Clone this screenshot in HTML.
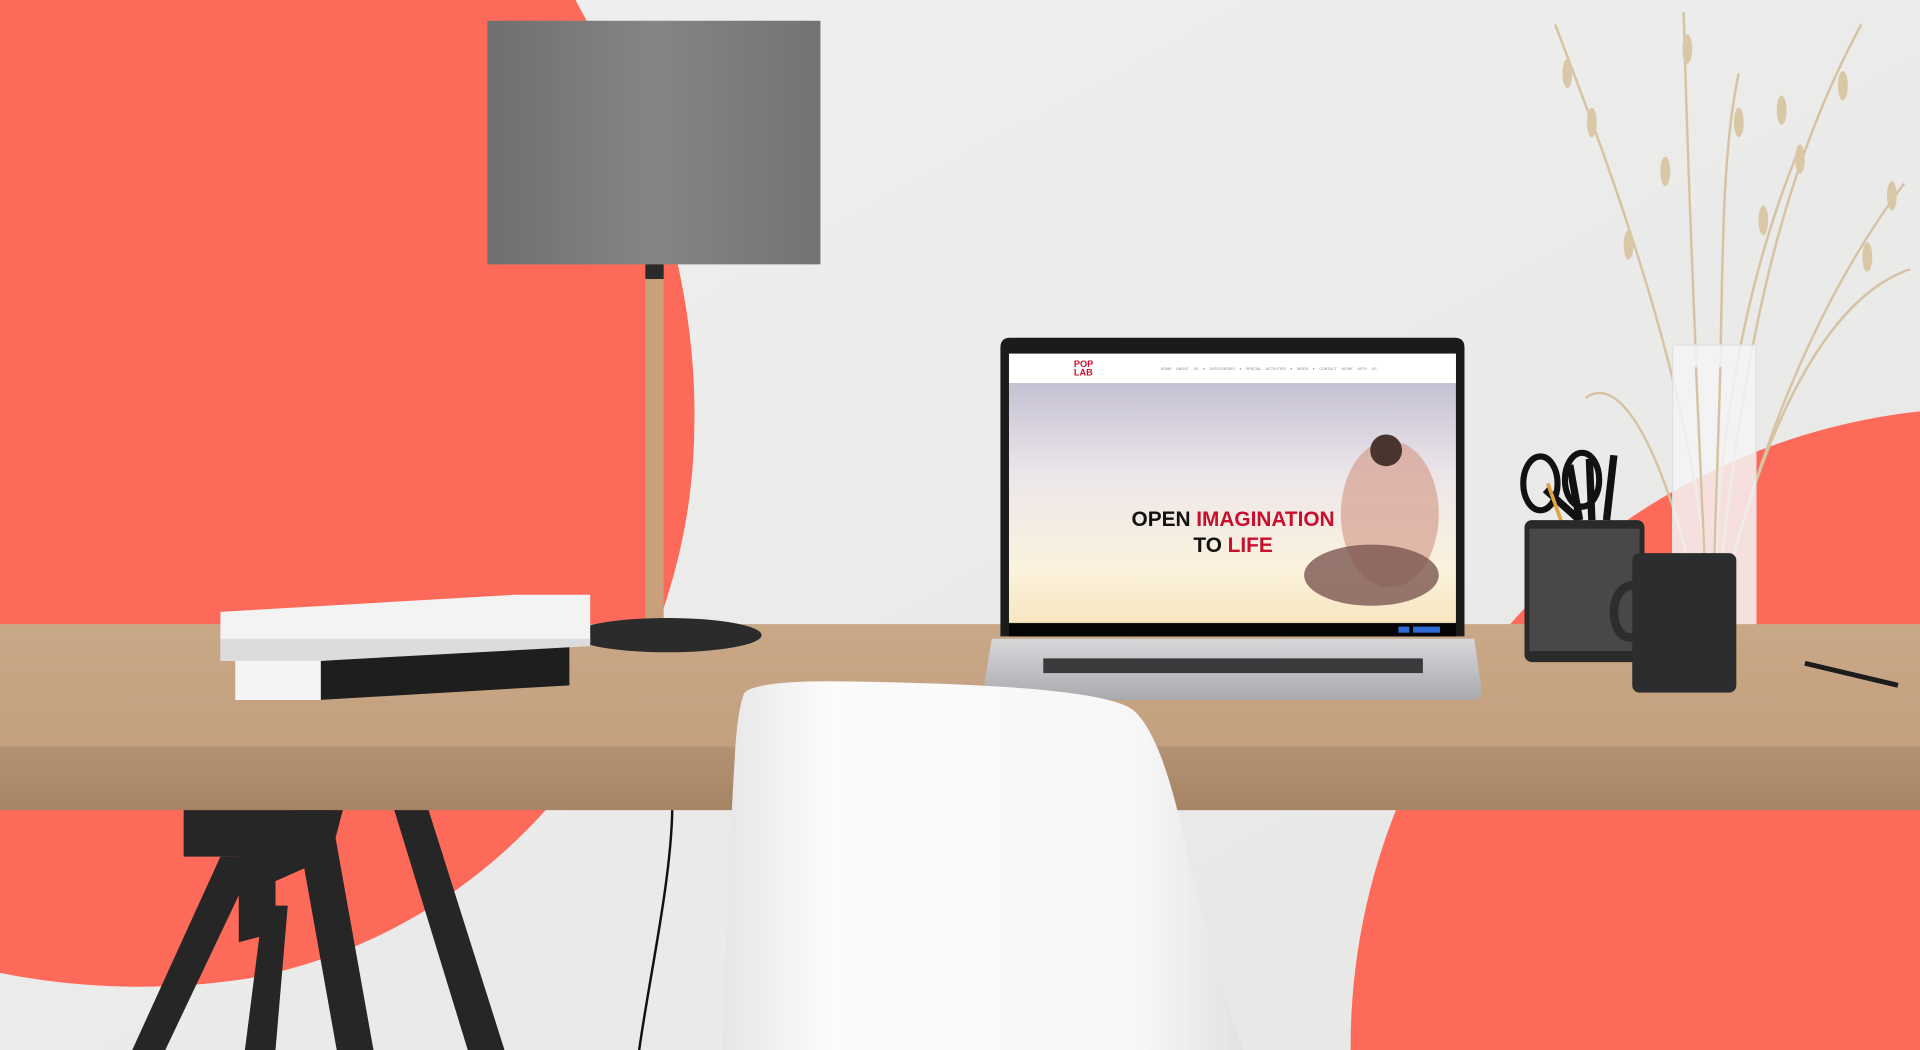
<!DOCTYPE html>
<html><head><meta charset="utf-8"><style>
html,body{margin:0;padding:0;width:1920px;height:1050px;overflow:hidden;background:#ebebea;position:relative}
svg{display:block;position:absolute;left:0;top:0}
</style></head><body>
<svg width="1920" height="1050" viewBox="0 0 1568 858" preserveAspectRatio="none" xmlns="http://www.w3.org/2000/svg">
<defs>
<linearGradient id="wall" x1="0" y1="0" x2="1" y2="1"><stop offset="0" stop-color="#f0f0ef"/><stop offset="1" stop-color="#e6e6e5"/></linearGradient>
<linearGradient id="desk" x1="0" y1="0" x2="0" y2="1"><stop offset="0" stop-color="#c9a887"/><stop offset="1" stop-color="#c3a07e"/></linearGradient>
<linearGradient id="edge" x1="0" y1="0" x2="0" y2="1"><stop offset="0" stop-color="#b39373"/><stop offset="1" stop-color="#a68464"/></linearGradient>
<linearGradient id="shade" x1="0" y1="0" x2="1" y2="0"><stop offset="0" stop-color="#6f6f6f"/><stop offset=".5" stop-color="#858585"/><stop offset="1" stop-color="#737373"/></linearGradient>
<linearGradient id="scr" x1="0" y1="0" x2="0" y2="1"><stop offset="0" stop-color="#b9b5cc"/><stop offset=".45" stop-color="#ece6ea"/><stop offset=".8" stop-color="#fbf2dd"/><stop offset="1" stop-color="#f7e6c0"/></linearGradient>
<linearGradient id="base" x1="0" y1="0" x2="0" y2="1"><stop offset="0" stop-color="#d6d7d9"/><stop offset="1" stop-color="#a9aaad"/></linearGradient>
<linearGradient id="chair" x1="0" y1="0" x2="1" y2="0"><stop offset="0" stop-color="#e6e6e6"/><stop offset=".2" stop-color="#fbfbfb"/><stop offset=".8" stop-color="#f7f7f7"/><stop offset="1" stop-color="#e2e2e2"/></linearGradient>
</defs>
<rect width="1568" height="858" fill="url(#wall)"/>
<path d="M0 0H470C530 110 570 230 567 350C565 560 420 760 200 800C120 812 50 805 0 795Z" fill="#fe6a5a"/>
<circle cx="1625" cy="855" r="522" fill="#fe6a5a"/>
<g stroke="#d6c3a3" stroke-width="2" fill="none">
<path d="M1395 520C1390 400 1380 200 1375 10"/><path d="M1398 520C1400 380 1420 240 1470 120"/>
<path d="M1392 520C1370 400 1330 300 1295 325"/><path d="M1400 520C1430 380 1480 250 1555 150"/>
<path d="M1396 520C1395 350 1320 150 1270 20"/><path d="M1400 520C1420 300 1450 150 1520 20"/>
<path d="M1398 520C1410 300 1400 150 1420 60"/><path d="M1400 520C1440 330 1500 240 1560 220"/>
</g>
<g fill="#d9c7a6"><ellipse cx="1378" cy="40" rx="4" ry="12"/><ellipse cx="1470" cy="130" rx="4" ry="12"/><ellipse cx="1440" cy="180" rx="4" ry="12"/><ellipse cx="1505" cy="70" rx="4" ry="12"/><ellipse cx="1330" cy="200" rx="4" ry="12"/><ellipse cx="1280" cy="60" rx="4" ry="12"/><ellipse cx="1545" cy="160" rx="4" ry="12"/><ellipse cx="1420" cy="100" rx="4" ry="12"/><ellipse cx="1360" cy="140" rx="4" ry="12"/><ellipse cx="1455" cy="90" rx="4" ry="12"/><ellipse cx="1525" cy="210" rx="4" ry="12"/><ellipse cx="1300" cy="100" rx="4" ry="12"/></g>
<rect x="1366" y="282" width="68" height="248" fill="#f4f4f4" fill-opacity=".85" stroke="#e0e0e0"/>
<path d="M1385 300L1395 520M1405 300L1398 520" stroke="#d6c3a3" stroke-width="2"/>
<path d="M398 17H670V216H398Z" fill="url(#shade)"/>
<rect x="527" y="216" width="15" height="296" fill="#c9a07a"/>
<rect x="527" y="216" width="15" height="12" fill="#2a2a2a"/>
<rect x="0" y="510" width="1568" height="102" fill="url(#desk)"/>
<rect x="0" y="610" width="1568" height="52" fill="url(#edge)"/>
<g fill="#262626">
<path d="M150 662H280L270 700L225 720V762L195 770V700H150Z"/>
<path d="M180 700L210 700L135 858H108Z"/>
<path d="M240 662H270L305 858H275Z"/>
<path d="M215 740L235 740L225 858H200Z"/>
<path d="M322 662H350L412 858H382Z"/>
</g>
<path d="M549 662C548 720 530 800 522 858" stroke="#111" stroke-width="2" fill="none"/>
<ellipse cx="545" cy="519" rx="77" ry="14" fill="#2b2b2b"/>
<path d="M192 528H465V560L260 572H192Z" fill="#1e1e1e"/>
<path d="M192 528H262V572H192Z" fill="#f4f4f4"/>
<path d="M180 500L420 486H482V525L262 540H180Z" fill="#f3f3f3"/>
<path d="M180 522H482V528L262 540H180Z" fill="#dcdcdc"/>
<path d="M817 284Q817 276 825 276H1188Q1196 276 1196 284V520H817Z" fill="#1b1b1b"/>
<rect x="824" y="289" width="365" height="220" fill="url(#scr)"/>
<rect x="824" y="289" width="365" height="24" fill="#fff"/>
<text x="877" y="300" font-family="Liberation Sans, sans-serif" font-weight="bold" font-size="7.5" fill="#c8102e">POP</text>
<text x="877" y="307" font-family="Liberation Sans, sans-serif" font-weight="bold" font-size="7.5" fill="#c8102e">LAB</text>
<text x="948" y="302.5" font-family="Liberation Sans, sans-serif" font-size="3" fill="#888" word-spacing="3">HOME ABOUT US ▾ DISCOVERIES ▾ SPECIAL ACTIVITIES ▾ BIRDS ▾ CONTACT WORK WITH US</text>
<ellipse cx="1135" cy="420" rx="40" ry="60" fill="#d6a090" opacity=".7"/>
<ellipse cx="1120" cy="470" rx="55" ry="25" fill="#7c5650" opacity=".8"/>
<circle cx="1132" cy="368" r="13" fill="#4a3430"/>
<text x="1007" y="430" text-anchor="middle" font-family="Liberation Sans, sans-serif" font-weight="bold" font-size="17"><tspan fill="#111">OPEN </tspan><tspan fill="#c8102e">IMAGINATION</tspan></text>
<text x="1007" y="451" text-anchor="middle" font-family="Liberation Sans, sans-serif" font-weight="bold" font-size="17"><tspan fill="#111">TO </tspan><tspan fill="#c8102e">LIFE</tspan></text>
<rect x="824" y="510" width="365" height="10" fill="#050505"/>
<rect x="1142" y="512" width="9" height="5" fill="#2d6ad3"/><rect x="1154" y="512" width="22" height="5" fill="#2d6ad3"/>
<path d="M810 522H1204L1210 564Q1210 572 1200 572H812Q803 572 803 564Z" fill="url(#base)"/>
<rect x="852" y="538" width="310" height="12" fill="#3a3a3c"/>
<path d="M1262 400L1290 425M1282 380L1290 425M1298 375L1300 425M1318 372L1312 425" stroke="#111" stroke-width="6"/>
<ellipse cx="1258" cy="395" rx="14" ry="22" fill="none" stroke="#111" stroke-width="5"/>
<ellipse cx="1292" cy="392" rx="14" ry="22" fill="none" stroke="#111" stroke-width="5"/>
<path d="M1264 395L1280 440" stroke="#e0a43a" stroke-width="3"/>
<rect x="1245" y="425" width="98" height="116" rx="6" fill="#2a2a2a"/>
<rect x="1249" y="432" width="90" height="100" fill="#5d5d5d" opacity=".6"/>
<rect x="1333" y="452" width="85" height="114" rx="6" fill="#2c2d2f"/>
<path d="M1335 478C1310 478 1315 528 1335 520" stroke="#2c2d2f" stroke-width="7" fill="none"/>
<path d="M1474 542L1550 560" stroke="#1c1c1c" stroke-width="4"/>
<path d="M608 566Q620 555 700 557Q900 560 925 580Q950 600 970 700Q995 800 1015 858H590Q595 700 600 620Q602 580 608 566Z" fill="url(#chair)"/>
</svg>
</body></html>
